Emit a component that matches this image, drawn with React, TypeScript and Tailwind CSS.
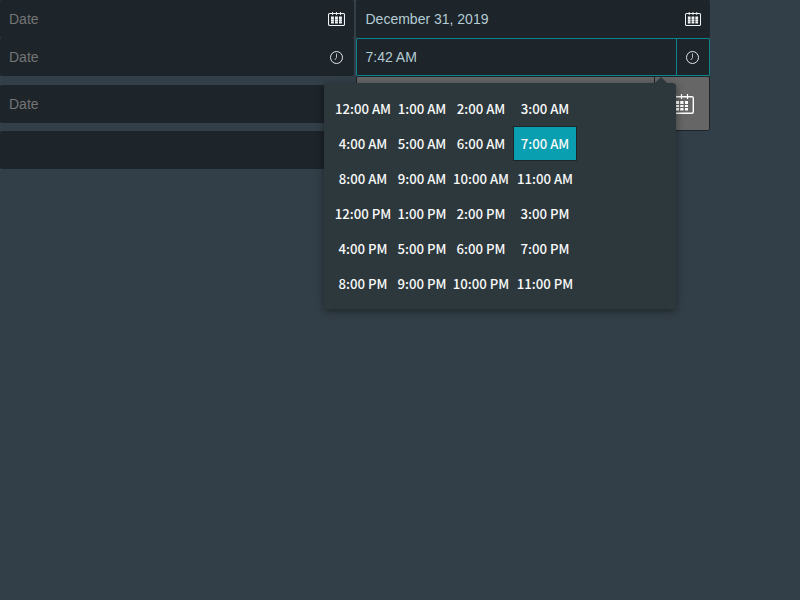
import React from "react";

const times = [
  "12:00 AM", "1:00 AM", "2:00 AM", "3:00 AM",
  "4:00 AM", "5:00 AM", "6:00 AM", "7:00 AM",
  "8:00 AM", "9:00 AM", "10:00 AM", "11:00 AM",
  "12:00 PM", "1:00 PM", "2:00 PM", "3:00 PM",
  "4:00 PM", "5:00 PM", "6:00 PM", "7:00 PM",
  "8:00 PM", "9:00 PM", "10:00 PM", "11:00 PM",
];

function CalendarIcon({ className }: { className: string }) {
  return (
    <svg className={className} viewBox="0 0 17 14" preserveAspectRatio="none" fill="none">
      <rect x="0.5" y="1.5" width="16" height="12" rx="1.2" stroke="#f1f3f4" strokeWidth="1.1" />
      <path d="M4.500 0v3M8.500 0v3M12.500 0v3" stroke="#f1f3f4" strokeWidth="0.9" />
      <path
        d="M3 4.500h2.900v2.500H3zM7 4.500h2.900v2.500H7zM11 4.500h2.900v2.500h-2.900zM3 7.200h2.900v2.100H3zM7 7.200h2.900v2.100H7zM11 7.200h2.900v2.100h-2.900zM3 9.500h2.900v2H3zM7 9.500h2.900v2H7zM11 9.500h2.900v2h-2.900z"
        fill="#f1f3f4"
      />
    </svg>
  );
}

function LargeCalendarIcon() {
  return (
    <svg className="h-[20px] w-[24px]" viewBox="0 0 24 20" fill="none">
      <rect x="0.700" y="2.700" width="22.600" height="16.600" rx="1.500" stroke="#fff" strokeWidth="1.400" />
      <path d="M5.500 0v5M11.500 0v5M17.500 0v5" stroke="#fff" strokeWidth="1.200" />
      <path
        d="M6 7h3v3H6zM10.200 7h3.300v3h-3.300zM15 7h3v3H15zM6 11h3v2H6zM10.200 11h3.300v2h-3.300zM15 11h3v2H15zM6 14h3v2.500H6zM10.200 14h3.300v2.500h-3.300zM15 14h3v2.500H15z"
        fill="#fff"
      />
    </svg>
  );
}

function ClockIcon() {
  return (
    <svg className="h-[13px] w-[13px]" viewBox="0 0 13 13" fill="none" stroke="#e3e5e6">
      <circle cx="6.5" cy="6.5" r="6" />
      <path d="M6.500 2.500V6.500L4.800 9" strokeWidth="0.8" />
    </svg>
  );
}

function Field({ text = "", icon }: { text?: string; icon?: React.ReactNode }) {
  return (
    <div className="flex h-[38px] w-[354px] items-center justify-between rounded-[2px] bg-[#1d242a] pl-[9px]">
      <span className="text-[#757575]">{text}</span>
      {icon && <span className="flex w-[35px] justify-center">{icon}</span>}
    </div>
  );
}

function TimePopup() {
  return (
    <div className="absolute top-[83px] left-[324px] h-[226px] w-[352px] rounded-[4px] bg-[#2d383d] pt-2 pl-[9px] shadow-[0_2px_8px_rgba(0,0,0,0.45)]">
      <svg className="absolute -top-[6px] left-[331px] h-[6px] w-[12px]" viewBox="0 0 12 6">
        <path d="M0 6L6 0L12 6Z" fill="#2d383d" />
      </svg>
      <div className="grid grid-cols-[60px_58px_60px_2px_64px] font-['Noto_Sans_CJK_JP',sans-serif] text-[13.200px] leading-[20px] font-medium text-[#f8f8f8]">
        {times.map((time, index) => (
          <React.Fragment key={time}>
            {index % 4 === 3 && <div />}
            <div
              className={
                time === "7:00 AM"
                  ? "flex h-[35px] items-center justify-center border border-[#1d242a] bg-[#0a9fb0] whitespace-nowrap"
                  : "flex h-[35px] items-center justify-center whitespace-nowrap"
              }
            >
              {time}
            </div>
          </React.Fragment>
        ))}
      </div>
    </div>
  );
}

export default function App() {
  return (
    <div className="relative h-[600px] w-[800px] overflow-hidden bg-[#333f48] font-['Liberation_Sans',sans-serif] text-[14px]">
      <div className="flex gap-[2px]">
        <div className="flex flex-col">
          <Field text="Date" icon={<CalendarIcon className="h-[14px] w-[17px]" />} />
          <Field text="Date" icon={<ClockIcon />} />
          <div className="mt-[9px]">
            <Field text="Date" />
          </div>
          <div className="mt-2">
            <Field />
          </div>
        </div>
        <div className="flex w-[354px] flex-col">
          <div className="flex h-[38px] items-center justify-between rounded-[2px] bg-[#1d242a] pl-[9.500px] text-[#b4ccd4]">
            <span>December 31, 2019</span>
            <span className="flex w-[34px] justify-center">
              <CalendarIcon className="h-[14px] w-[16px]" />
            </span>
          </div>
          <div className="flex h-[38px] rounded-[2px] border border-[#0a858c] bg-[#1d242a] text-[#b4ccd4]">
            <div className="flex flex-1 items-center pl-[8.500px]">7:42 AM</div>
            <div className="flex w-[33px] items-center border-l border-[#0a858c] pl-[9px]">
              <ClockIcon />
            </div>
          </div>
          <div className="flex h-[55px] rounded-[2px] border border-[#1d242a] bg-[#666]">
            <div className="flex-1" />
            <div className="flex w-[55px] items-center justify-center border-l border-[#1d242a]">
              <LargeCalendarIcon />
            </div>
          </div>
        </div>
      </div>
      <TimePopup />
    </div>
  );
}
